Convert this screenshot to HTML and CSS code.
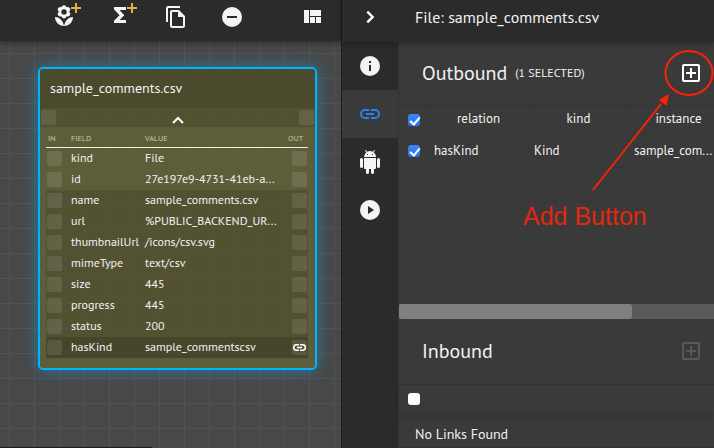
FILE: index.html
```html
<!DOCTYPE html>
<html lang="en">
<head>
<meta charset="utf-8">
<title>File: sample_comments.csv</title>
<link rel="stylesheet" href="styles.css">
</head>
<body>
<div class="app">
  <main class="canvas">
    <header class="toolbar">
      <button class="tool" aria-label="Add item">
        <svg width="26" height="26" viewBox="-3 3 26 26"><g transform="translate(0 3)" fill="#f4f4f4"><path d="M1 13c0 5 4 9 9 9-1-5-4-9-9-9z"/><path d="M19 13c0 5-4 9-9 9 1-5 4-9 9-9z"/><path fill-rule="evenodd" d="M10 1.200c1.400 0 2.400 1 2.500 2.100 1.600-.7 3.800.3 3.800 2.300 0 1-.6 1.900-1.400 2.200.8.400 1.400 1.300 1.400 2.300 0 1.900-2.100 3.100-3.800 2.200-.1 1.300-1.200 2.200-2.500 2.200s-2.400-.9-2.500-2.200c-1.700.9-3.800-.3-3.800-2.200 0-1 .6-1.900 1.400-2.300-.8-.3-1.400-1.200-1.400-2.200 0-2 2.200-3 3.800-2.300C7.600 2.200 8.600 1.200 10 1.200zm0 4a2.700 2.700 0 1 0 0 5.400 2.700 2.700 0 0 0 0-5.400z"/></g><path class="plus" d="M17 7h10M22 2v10"/></svg>
      </button>
      <button class="tool" aria-label="Add formula">
        <svg width="26" height="26" viewBox="-3 3 26 26"><path fill="#f4f4f4" d="M4 6h12v3H9.500l4.800 5.200L9.500 19H16v3H4v-2.200l5.500-5.600L4 8.200z"/><path class="plus" d="M17 7h10M22 2v10"/></svg>
      </button>
      <button class="tool" aria-label="Copy">
        <svg width="24" height="24" viewBox="0 0 24 24"><path fill="#f4f4f4" d="M16 1H4a2 2 0 0 0-2 2v14h2V3h12V1zm-1 4l6 6v10a2 2 0 0 1-2 2H8a2 2 0 0 1-2-2V7c0-1.100.9-2 2-2h7zm-1 7V7H8v14h11v-9h-5z"/></svg>
      </button>
      <button class="tool" aria-label="Remove">
        <svg width="24" height="24" viewBox="0 0 24 24"><path fill="#f4f4f4" d="M12 2a10 10 0 1 0 0 20 10 10 0 0 0 0-20zm5 11H7v-2h10v2z"/></svg>
      </button>
      <button class="tool tool-last" aria-label="Layout">
        <svg width="24" height="24" viewBox="0 0 24 24"><path fill="#f4f4f4" d="M4 5h5v13H4zM10 12h5v6h-5zM16 12h5v6h-5zM10 5h11v6H10z"/></svg>
      </button>
    </header>
    <section class="node">
      <h2 class="node-title">sample_comments.csv</h2>
      <div class="node-fold">
        <span class="port"></span>
        <button class="fold" aria-label="Collapse"><svg width="14" height="10" viewBox="0 0 14 10"><path d="M2 8l5-5 5 5" fill="none" stroke="#fff" stroke-width="2"/></svg></button>
        <span class="port"></span>
      </div>
      <table class="fields">
        <colgroup><col class="c-in"><col class="c-field"><col><col class="c-out"></colgroup>
        <thead><tr><th>IN</th><th>FIELD</th><th>VALUE</th><th class="out">OUT</th></tr></thead>
        <tbody>
          <tr><td><span class="port"></span></td><td>kind</td><td>File</td><td><span class="port"></span></td></tr>
          <tr><td><span class="port"></span></td><td>id</td><td>27e197e9-4731-41eb-a...</td><td><span class="port"></span></td></tr>
          <tr class="dim"><td><span class="port"></span></td><td>name</td><td>sample_comments.csv</td><td><span class="port"></span></td></tr>
          <tr class="dim"><td><span class="port"></span></td><td>url</td><td>%PUBLIC_BACKEND_UR...</td><td><span class="port"></span></td></tr>
          <tr class="dim"><td><span class="port"></span></td><td>thumbnailUrl</td><td>/icons/csv.svg</td><td><span class="port"></span></td></tr>
          <tr class="dim"><td><span class="port"></span></td><td>mimeType</td><td>text/csv</td><td><span class="port"></span></td></tr>
          <tr class="dim"><td><span class="port"></span></td><td>size</td><td>445</td><td><span class="port"></span></td></tr>
          <tr class="dim"><td><span class="port"></span></td><td>progress</td><td>445</td><td><span class="port"></span></td></tr>
          <tr class="dim"><td><span class="port"></span></td><td>status</td><td>200</td><td><span class="port"></span></td></tr>
          <tr class="linked"><td><span class="port"></span></td><td>hasKind</td><td>sample_commentscsv</td><td><span class="port"><svg width="15" height="15" viewBox="0 0 24 24"><path fill="#fff" d="M3.900 12A3.100 3.100 0 0 1 7 8.900h4V6.500H7a5.500 5.500 0 0 0 0 11h4v-2.400H7A3.100 3.100 0 0 1 3.900 12zM8 13.200h8v-2.400H8v2.400zm9-6.700h-4v2.400h4a3.100 3.100 0 0 1 0 6.200h-4v2.400h4a5.500 5.500 0 0 0 0-11z"/></svg></span></td></tr>
        </tbody>
      </table>
    </section>
    <div class="h-scroll"></div>
  </main>

  <aside class="panel">
    <header class="panel-head">
      <button class="close" aria-label="Close panel"><svg width="24" height="24" viewBox="0 0 24 24"><path d="M9.300 6.700l5.300 5.300-5.300 5.300" fill="none" stroke="#fff" stroke-width="2.400"/></svg></button>
      <h1>File: sample_comments.csv</h1>
    </header>
    <div class="panel-body">
      <nav class="rail">
        <button aria-label="Info"><svg width="24" height="24" viewBox="0 0 24 24"><path fill="#f4f4f4" d="M12 2a10 10 0 1 0 0 20 10 10 0 0 0 0-20zm1 15h-2v-6h2v6zm0-8h-2V7h2v2z"/></svg></button>
        <button class="active" aria-label="Links"><svg width="24" height="24" viewBox="0 0 24 24"><path fill="#2186f0" d="M3.900 12A3.100 3.100 0 0 1 7 8.900h4V7H7a5 5 0 0 0 0 10h4v-1.900H7A3.100 3.100 0 0 1 3.900 12zM8 13h8v-2H8v2zm9-6h-4v1.900h4a3.100 3.100 0 0 1 0 6.200h-4V17h4a5 5 0 0 0 0-10z"/></svg></button>
        <button aria-label="Android"><svg width="24" height="24" viewBox="0 0 24 24"><path fill="#f4f4f4" d="M6 18c0 .55.45 1 1 1h1v3.500a1.500 1.500 0 0 0 3 0V19h2v3.500a1.500 1.500 0 0 0 3 0V19h1c.55 0 1-.45 1-1V8H6v10zM3.500 8A1.500 1.500 0 0 0 2 9.500v7a1.500 1.500 0 0 0 3 0v-7A1.500 1.500 0 0 0 3.500 8zm17 0A1.500 1.500 0 0 0 19 9.500v7a1.500 1.500 0 0 0 3 0v-7A1.500 1.500 0 0 0 20.500 8zm-4.970-5.840l1.300-1.300c.2-.2.2-.51 0-.71s-.51-.2-.71 0l-1.480 1.480A5.840 5.840 0 0 0 12 1c-.96 0-1.860.23-2.660.63L7.850.15c-.2-.2-.51-.2-.71 0s-.2.51 0 .71l1.310 1.310A5.980 5.980 0 0 0 6 7h12c0-1.990-.97-3.750-2.470-4.840zM10 5H9V4h1v1zm5 0h-1V4h1v1z"/></svg></button>
        <button aria-label="Run"><svg width="24" height="24" viewBox="0 0 24 24"><path fill="#f4f4f4" d="M12 2a10 10 0 1 0 0 20 10 10 0 0 0 0-20zm-2 14V8l6 4-6 4z"/></svg></button>
      </nav>
      <div class="links">
        <section>
          <div class="links-head">
            <h2>Outbound</h2><span class="count">(1 SELECTED)</span>
            <button class="add" aria-label="Add outbound link"><svg width="24" height="24" viewBox="0 0 24 24"><path fill="currentColor" d="M19 3H5a2 2 0 0 0-2 2v14c0 1.100.9 2 2 2h14a2 2 0 0 0 2-2V5a2 2 0 0 0-2-2zm0 16H5V5h14v14zm-8-2h2v-4h4v-2h-4V7h-2v4H7v2h4z"/></svg></button>
          </div>
          <div class="scroller">
            <table class="grid">
              <colgroup><col class="g-check"><col class="g-col"><col class="g-col"><col class="g-col"><col class="g-col"></colgroup>
              <thead><tr><th><input type="checkbox" checked aria-label="Select all outbound"></th><th>relation</th><th>kind</th><th>instance</th><th></th></tr></thead>
              <tbody>
                <tr><td><input type="checkbox" checked aria-label="Select hasKind"></td><td>hasKind</td><td>Kind</td><td>sample_com...</td><td></td></tr>
                <tr><td></td><td></td><td></td><td></td><td></td></tr>
                <tr><td></td><td></td><td></td><td></td><td></td></tr>
                <tr><td></td><td></td><td></td><td></td><td></td></tr>
                <tr><td></td><td></td><td></td><td></td><td></td></tr>
              </tbody>
            </table>
          </div>
          <div class="track"><div class="thumb"></div></div>
        </section>
        <section>
          <div class="links-head inbound">
            <h2>Inbound</h2>
            <button class="add" disabled aria-label="Add inbound link"><svg width="24" height="24" viewBox="0 0 24 24"><path fill="currentColor" d="M19 3H5a2 2 0 0 0-2 2v14c0 1.100.9 2 2 2h14a2 2 0 0 0 2-2V5a2 2 0 0 0-2-2zm0 16H5V5h14v14zm-8-2h2v-4h4v-2h-4V7h-2v4H7v2h4z"/></svg></button>
          </div>
          <div class="in-row"><input type="checkbox" aria-label="Select all inbound"></div>
          <p class="empty">No Links Found</p>
        </section>
      </div>
    </div>
    <div class="callout">
      <svg width="192" height="150" viewBox="0 0 192 150"><g fill="none" stroke="#ff2008" stroke-width="2"><ellipse cx="167" cy="26" rx="23.500" ry="22"/><path d="M71 143L139 57"/></g><path fill="#ff2008" d="M147 47l-2.500 12-7.500-6z"/></svg>
      <span>Add Button</span>
    </div>
  </aside>
</div>
</body>
</html>
```
FILE: styles.css
```css
* { box-sizing: border-box; }
body { margin: 0; background: #3a3a3a; color: #f2f2f2; font-family: "Noto Sans", sans-serif; font-family: "PT Sans", "Noto Sans", sans-serif; font-size: 12px; }
h1, h2, p { margin: 0; font-weight: 400; }
button { display: flex; align-items: center; justify-content: center; padding: 0; border: 0; background: none; color: #fff; }
svg { display: block; }
table { border-collapse: separate; border-spacing: 0; table-layout: fixed; }
th, td { padding: 0; font-weight: 400; text-align: left; white-space: nowrap; }

.app { display: grid; grid-template-columns: minmax(0, 342fr) minmax(0, 372fr); min-height: 100vh; overflow: hidden; }

.canvas {
  position: relative;
  display: flex;
  flex-direction: column;
  border-right: 1px solid #1e1e1e;
  background-color: #484848;
  background-image: linear-gradient(90deg, #525252 1px, transparent 1px), linear-gradient(#525252 1px, transparent 1px);
  background-size: 25px 25px;
  background-position: 9px 3px;
}
.toolbar { display: flex; align-items: center; height: 41px; padding: 0 17px 8px 36px; background: #2b2b2b; box-shadow: 0 2px 6px rgba(0, 0, 0, .4); }
.tool { width: 56px; height: 33px; }
.tool svg { overflow: visible; }
.tool-last { width: 24px; margin-left: auto; }
.plus { fill: none; stroke: #e0b040; stroke-width: 2; }

.node { margin: 26px 24px 0 38px; border: 2px solid #00b4ff; border-radius: 5px; background: rgba(99, 97, 55, .85); box-shadow: 0 0 16px rgba(0, 180, 255, .5); padding-bottom: 10px; }
.node-title { height: 39px; padding: 0 10px; font-size: 14px; line-height: 39px; background: rgba(0, 0, 0, .2); }
.node-fold { display: flex; justify-content: space-between; align-items: center; height: 19px; padding: 0 1px; background: rgba(0, 0, 0, .12); }
.fold { padding-top: 4px; }
.port { display: flex; align-items: center; justify-content: center; width: 15px; height: 15px; border-radius: 2px; background: rgba(255, 255, 255, .1); }
.fields { width: 262px; max-width: 100%; margin-left: 6px; font-size: 12px; }
.c-in { width: 25px; }
.c-field { width: 74px; }
.c-out { width: 20px; }
.fields th { height: 21px; padding-top: 2px; border-bottom: 1px solid #f0f0e0; color: #c8c8ba; font-size: 8px; }
.fields th:first-child { padding-left: 2px; }
.fields th.out { direction: rtl; padding-right: 1px; }
.fields td { height: 21px; padding-bottom: 2px; line-height: 19px; }
.fields td:first-child, .fields td:last-child { padding-bottom: 0; }
.fields td .port { margin: 0 1px; }
.fields td:last-child .port { margin-left: 4px; }
.dim { background: rgba(0, 0, 0, .12); }
.linked { background: rgba(0, 0, 0, .24); }
.h-scroll { width: 152px; height: 1px; margin-top: auto; background: #1c1c1c; }

.panel { position: relative; display: flex; flex-direction: column; background: #3a3a3a; }
.panel-head { position: relative; display: flex; align-items: center; height: 42px; padding-bottom: 8px; background: #2b2b2b; box-shadow: 0 2px 6px rgba(0, 0, 0, .3); }
.close { width: 56px; height: 34px; }
.panel-head h1 { margin-left: 17px; font-size: 16px; white-space: nowrap; }
.panel-body { display: flex; flex: 1; }
.rail { flex: none; width: 57px; background: #2b2b2b; border-right: 1px solid #343434; }
.rail button { width: 56px; height: 48px; }
.rail .active { background: #3a3a3a; }
.links { flex: 1; min-width: 0; }
.links-head { display: flex; align-items: center; height: 63px; padding: 0 11px 2px 23px; }
.links-head.inbound { height: 65px; }
.links-head h2 { font-size: 20px; }
.count { margin-left: 8px; font-size: 12px; }
.add { width: 24px; height: 24px; margin-left: auto; }
.add:disabled { color: #585858; }
.scroller { height: 199px; overflow: hidden; }
.grid { width: 430px; font-size: 13px; }
.g-check { width: 30px; }
.g-col { width: 100px; }
.grid th { height: 29px; padding-bottom: 3px; text-align: center; border-top: 1px solid #333; border-right: 1px solid #363636; border-bottom: 1px solid #353535; }
.grid td { height: 34px; padding: 0 0 0 5px; border-right: 1px solid #383838; border-bottom: 1px solid #363636; }
.grid th:first-child, .grid td:first-child { padding: 0 0 2px; text-align: center; }
input[type="checkbox"] { display: inline-block; appearance: none; width: 12px; height: 12px; margin: 0; border-radius: 3px; background: #fff; vertical-align: middle; }
input[type="checkbox"]:checked { background: #2f7cf6 linear-gradient(#3c86fa, #2872f0); }
input[type="checkbox"]:checked::after { content: ""; display: block; width: 4px; height: 8px; margin: 1px 0 0 4px; border: solid #fff; border-width: 0 2px 2px 0; transform: rotate(40deg); }
.track { height: 15px; background: #5a5a5a; }
.thumb { width: 74%; height: 15px; border-radius: 3px; background: #808080; }
.in-row { display: flex; align-items: center; height: 29px; padding-left: 9px; border-top: 1px solid #323232; box-shadow: 0 3px 6px rgba(0, 0, 0, .12); }
.empty { padding-left: 16px; font-size: 14px; line-height: 42px; height: 35px; border-bottom: 1px solid #333; overflow: hidden; }

.callout { position: absolute; top: 47px; right: 0; width: 192px; pointer-events: none; color: #e02810; font: 25px/30px "Liberation Sans", Arial, sans-serif; }
.callout span { display: block; margin: 4px 0 0 1px; }
```
